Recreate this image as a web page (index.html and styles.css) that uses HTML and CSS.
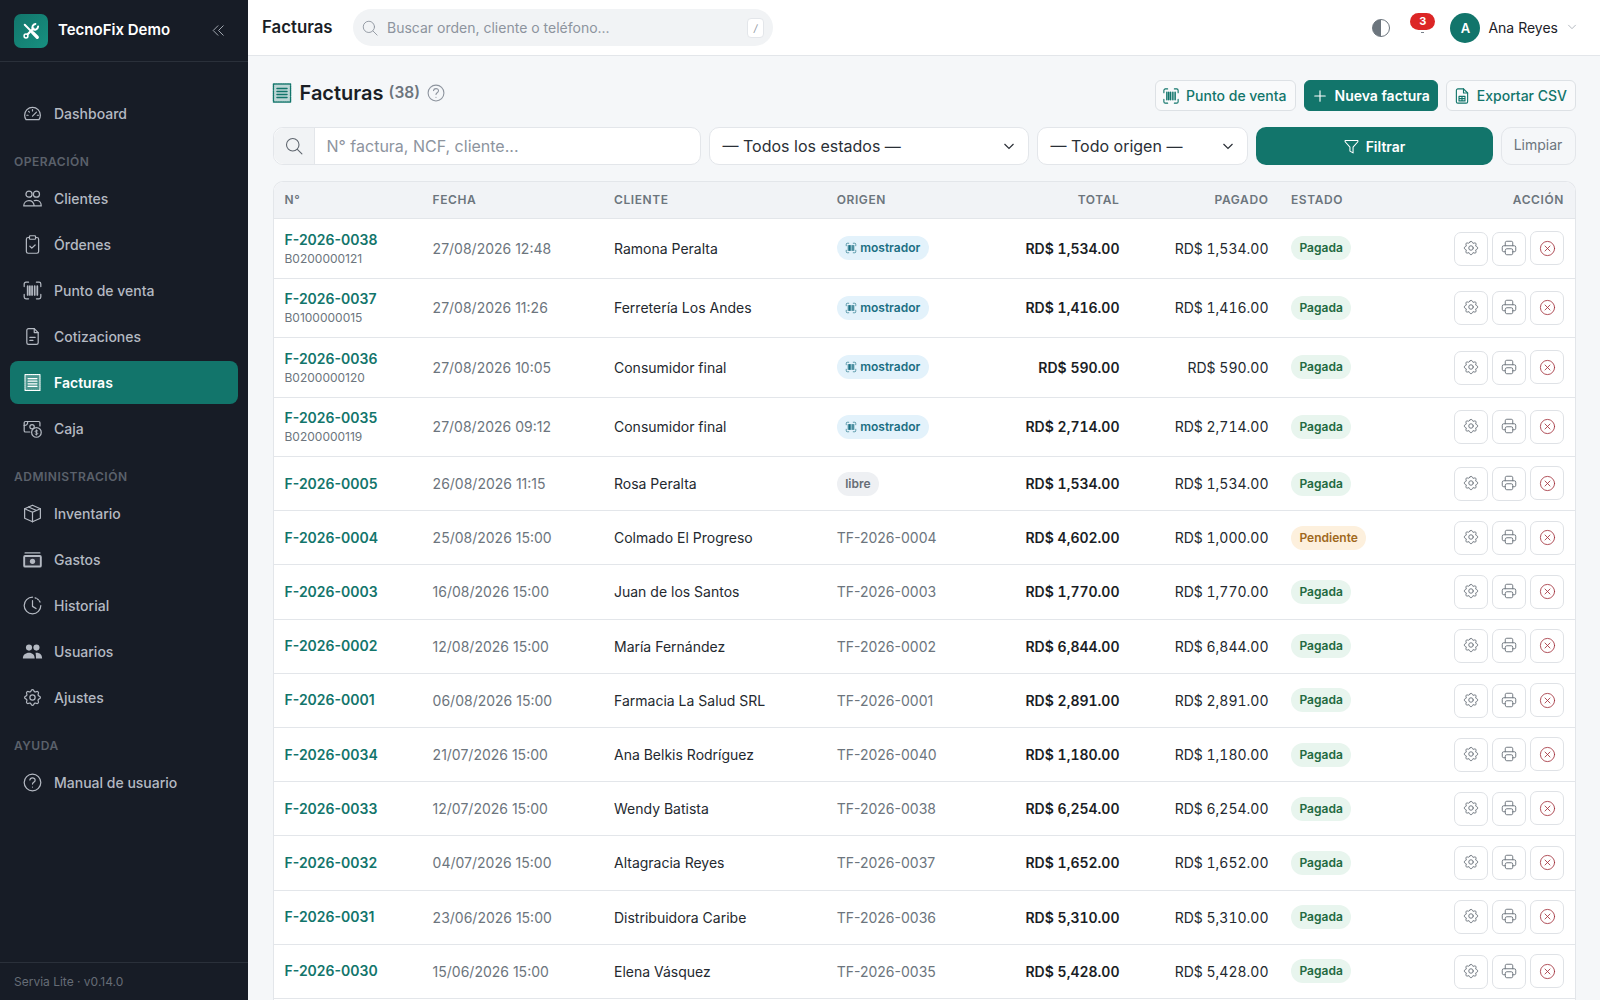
FILE: index.html
```html
<!DOCTYPE html>
<html lang="es">
<head>
    <meta charset="UTF-8">
    <title>Facturas - TecnoFix Demo</title>
    <link rel="stylesheet" href="styles.css">
</head>
<body>
    <svg class="icon-defs" xmlns="http://www.w3.org/2000/svg">
        <symbol id="i-gauge" viewBox="0 0 24 24"><path d="M3 14a9 9 0 0 1 18 0c0 2-.6 3.600-1.600 5H4.600C3.600 17.600 3 16 3 14z"/><path d="M12 15l4.500-4.500M5.500 14h1.500M17.500 14H19M12 7.500V9M7.500 9.500l1 1"/></symbol>
        <symbol id="i-users" viewBox="0 0 24 24"><circle cx="8" cy="7" r="3.500"/><circle cx="16.500" cy="7" r="3.500"/><path d="M2 20.500c0-3.500 2.500-6 6-6s5.500 2.500 6 6zM14 14.500c.8-.2 1.600-.3 2.500-.3 3.200 0 5.500 2.700 5.500 6.300h-8"/></symbol>
        <symbol id="i-clipboard" viewBox="0 0 24 24"><path d="M8.500 4H7a2 2 0 0 0-2 2v14a2 2 0 0 0 2 2h10a2 2 0 0 0 2-2V6a2 2 0 0 0-2-2h-1.500"/><rect x="8.500" y="2" width="7" height="4" rx="1"/><path d="M9 14l2.200 2.200L15 12.500"/></symbol>
        <symbol id="i-scan" viewBox="0 0 24 24"><path d="M2.500 7.500V4.500a2 2 0 0 1 2-2h3M16.500 2.500h3a2 2 0 0 1 2 2v3M21.500 16.500v3a2 2 0 0 1-2 2h-3M7.500 21.500h-3a2 2 0 0 1-2-2v-3"/><path d="M6.500 7v10M9 7v10M11.500 7v10M14.500 7v10M17.500 7v10" stroke-width="2"/></symbol>
        <symbol id="i-file" viewBox="0 0 24 24"><path d="M14 3H7.500a2 2 0 0 0-2 2v14a2 2 0 0 0 2 2h9a2 2 0 0 0 2-2V7.500z"/><path d="M14 3v4.500h4.500M9 13h6M9 16.500h3.500"/></symbol>
        <symbol id="i-receipt" viewBox="0 0 24 24"><path d="M3.500 3h17v18h-17z" stroke-dasharray="1.500 .8"/><path d="M4.500 4h15v16h-15z" fill="currentColor" fill-opacity=".25" stroke="none"/><path d="M7 7.500h10M7 10.500h10M7 13.500h10M7 16.500h10" stroke-width="1.500"/></symbol>
        <symbol id="i-cash" viewBox="0 0 24 24"><path d="M9 16H4a1.500 1.500 0 0 1-1.500-1.500v-9A1.500 1.500 0 0 1 4 4h15a1.500 1.500 0 0 1 1.500 1.500V9"/><path d="M2.500 8.500a4 4 0 0 0 4-4"/><circle cx="11.500" cy="10" r="2.500"/><circle cx="16.500" cy="16.500" r="5.500"/><path d="M18 14.800c-1-.8-3-.6-3 .7s3 .9 3 2.200-2 1.500-3 .7M16.500 13.500v6" stroke-width="1.100"/></symbol>
        <symbol id="i-box" viewBox="0 0 24 24"><path d="M12 2.500l9 4v11l-9 4-9-4v-11z"/><path d="M3 6.500l9 4 9-4M12 10.500v11M7.500 4.500l9 4"/></symbol>
        <symbol id="i-money" viewBox="0 0 24 24"><path d="M3.500 4.500h17"/><rect x="2.500" y="8" width="19" height="12" rx="1" stroke-width="2.200" fill="currentColor" fill-opacity=".12"/><circle cx="12" cy="14" r="3" fill="currentColor" stroke="none"/></symbol>
        <symbol id="i-clock" viewBox="0 0 24 24"><path d="M12 2.500a9.500 9.500 0 1 0 9.500 9.500"/><path d="M15 3.200a9.500 9.500 0 0 1 6 6" stroke-dasharray="1.500 1.500"/><path d="M12 6.500V13l4 2.500"/></symbol>
        <symbol id="i-people" viewBox="0 0 24 24"><circle cx="8" cy="7.500" r="3.500" fill="currentColor" stroke="none"/><circle cx="16.500" cy="7.500" r="3.500" fill="currentColor" stroke="none"/><path d="M1 20c0-4 3-6.500 7-6.500s6.500 2.500 6.500 6.500zM15.500 13.500c4.500-.5 7.500 2 7.500 6.500h-7c0-2.500-.2-4.500-.5-6.500z" fill="currentColor" stroke="none"/></symbol>
        <symbol id="i-gear" viewBox="0 0 24 24"><path d="M10.325 4.317c.426-1.756 2.924-1.756 3.350 0a1.724 1.724 0 0 0 2.573 1.066c1.543-.94 3.310.826 2.370 2.370a1.724 1.724 0 0 0 1.065 2.572c1.756.426 1.756 2.924 0 3.350a1.724 1.724 0 0 0-1.066 2.573c.94 1.543-.826 3.310-2.370 2.370a1.724 1.724 0 0 0-2.572 1.065c-.426 1.756-2.924 1.756-3.350 0a1.724 1.724 0 0 0-2.573-1.066c-1.543.94-3.310-.826-2.370-2.370a1.724 1.724 0 0 0-1.065-2.572c-1.756-.426-1.756-2.924 0-3.350a1.724 1.724 0 0 0 1.066-2.573c-.94-1.543.826-3.310 2.370-2.370c1 .608 2.296.07 2.572-1.065z"/><circle cx="12" cy="12" r="3"/></symbol>
        <symbol id="i-help" viewBox="0 0 24 24"><circle cx="12" cy="12" r="9.500"/><path d="M12 17.200v.01M12 13.800c0-1.200.6-1.700 1.400-2.200 1-.6 1.600-1.200 1.600-2.300 0-1.500-1.300-2.600-3-2.600-1.600 0-2.800 1-3 2.400"/></symbol>
        <symbol id="i-printer" viewBox="0 0 24 24"><path d="M17 17h2a2 2 0 0 0 2-2v-4a2 2 0 0 0-2-2H5a2 2 0 0 0-2 2v4a2 2 0 0 0 2 2h2"/><path d="M17 9V5a2 2 0 0 0-2-2H9a2 2 0 0 0-2 2v4"/><path d="M7 15a2 2 0 0 1 2-2h6a2 2 0 0 1 2 2v4a2 2 0 0 1-2 2H9a2 2 0 0 1-2-2z"/></symbol>
        <symbol id="i-xcircle" viewBox="0 0 24 24"><circle cx="12" cy="12" r="10"/><path d="M8.500 8.500l7 7M15.500 8.500l-7 7"/></symbol>
        <symbol id="i-search" viewBox="0 0 24 24"><circle cx="10.500" cy="10.500" r="7.500"/><path d="M16 16l5.500 5.500"/></symbol>
    </svg>

    <div class="app">
        <aside class="sidebar">
            <div class="brand">
                <span class="brand-logo">
                    <svg viewBox="0 0 24 24" fill="none" stroke="currentColor" stroke-linecap="round">
                        <path d="M4.500 4.500l8.500 8.500" stroke-width="2.400"/>
                        <path d="M14 14l5.500 5.500" stroke-width="4"/>
                        <path d="M8 16l7-7" stroke-width="2.600"/>
                        <path d="M20.500 6.700a4.200 4.200 0 0 1-6.300 3.100M14.200 9.800a4.200 4.200 0 0 1 3.100-6.300" stroke-width="2.400"/>
                        <circle cx="6" cy="18" r="2.300" stroke-width="1.800"/>
                    </svg>
                </span>
                <span class="brand-name">TecnoFix Demo</span>
                <svg class="brand-toggle" viewBox="0 0 24 24" fill="none" stroke="currentColor" stroke-width="1.600"><path d="M11.500 4l-8 8 8 8M20 4l-8 8 8 8"/></svg>
            </div>
            <nav class="nav">
                <a class="nav-item"><svg class="ico"><use href="#i-gauge"/></svg>Dashboard</a>
                <div class="nav-label">Operación</div>
                <a class="nav-item"><svg class="ico"><use href="#i-users"/></svg>Clientes</a>
                <a class="nav-item"><svg class="ico"><use href="#i-clipboard"/></svg>Órdenes</a>
                <a class="nav-item"><svg class="ico"><use href="#i-scan"/></svg>Punto de venta</a>
                <a class="nav-item"><svg class="ico"><use href="#i-file"/></svg>Cotizaciones</a>
                <a class="nav-item active"><svg class="ico"><use href="#i-receipt"/></svg>Facturas</a>
                <a class="nav-item"><svg class="ico"><use href="#i-cash"/></svg>Caja</a>
                <div class="nav-label">Administración</div>
                <a class="nav-item"><svg class="ico"><use href="#i-box"/></svg>Inventario</a>
                <a class="nav-item"><svg class="ico"><use href="#i-money"/></svg>Gastos</a>
                <a class="nav-item"><svg class="ico"><use href="#i-clock"/></svg>Historial</a>
                <a class="nav-item"><svg class="ico"><use href="#i-people"/></svg>Usuarios</a>
                <a class="nav-item"><svg class="ico"><use href="#i-gear"/></svg>Ajustes</a>
                <div class="nav-label">Ayuda</div>
                <a class="nav-item"><svg class="ico"><use href="#i-help"/></svg>Manual de usuario</a>
            </nav>
            <div class="sidebar-foot">Servia Lite · v0.14.0</div>
        </aside>

        <main class="main">
            <header class="topbar">
                <div class="topbar-title">Facturas</div>
                <div class="global-search">
                    <svg class="ico"><use href="#i-search"/></svg>
                    <span class="global-search-text">Buscar orden, cliente o teléfono...</span>
                    <kbd>/</kbd>
                </div>
                <div class="topbar-right">
                    <span class="theme-toggle"></span>
                    <span class="notif">3</span>
                    <span class="avatar">A</span>
                    <span class="user-name">Ana Reyes</span>
                    <svg class="user-caret" viewBox="0 0 24 24" fill="none" stroke="currentColor" stroke-width="1.800"><path d="M3 7l9 9 9-9"/></svg>
                </div>
            </header>

            <section class="content">
                <div class="page-head">
                    <h1><svg class="ico title-ico"><use href="#i-receipt"/></svg>Facturas <small>(38)</small><svg class="ico help-ico"><use href="#i-help"/></svg></h1>
                    <div class="page-actions">
                        <a class="btn btn-outline"><svg class="ico"><use href="#i-scan"/></svg>Punto de venta</a>
                        <a class="btn btn-primary"><svg class="ico" viewBox="0 0 24 24"><path d="M12 5v14M5 12h14"/></svg>Nueva factura</a>
                        <a class="btn btn-outline"><svg class="ico" viewBox="0 0 24 24"><path d="M14 2.500H6.500a2 2 0 0 0-2 2v15a2 2 0 0 0 2 2h11a2 2 0 0 0 2-2V8z"/><path d="M14 2.500V8h5.500M8 12.500h8v6H8zM8 15.500h8M12 12.500v6"/></svg>Exportar CSV</a>
                    </div>
                </div>

                <div class="filters">
                    <div class="filter-search">
                        <span class="filter-search-ico"><svg class="ico"><use href="#i-search"/></svg></span>
                        <span class="filter-search-text">N° factura, NCF, cliente...</span>
                    </div>
                    <div class="select">— Todos los estados —<svg viewBox="0 0 24 24" fill="none" stroke="currentColor" stroke-width="2.400"><path d="M3 8l9 9 9-9"/></svg></div>
                    <div class="select">— Todo origen —<svg viewBox="0 0 24 24" fill="none" stroke="currentColor" stroke-width="2.400"><path d="M3 8l9 9 9-9"/></svg></div>
                    <a class="btn-filter"><svg class="ico" viewBox="0 0 24 24"><path d="M3 3.500h18v1.800l-6.800 7.700V21l-4.400-2.500V13L3 5.300z"/></svg>Filtrar</a>
                    <a class="btn-clear">Limpiar</a>
                </div>

                <div class="table-card">
                    <table class="invoices">
                        <colgroup>
                            <col class="c-num"><col class="c-date"><col class="c-client"><col class="c-origin"><col class="c-total"><col class="c-paid"><col class="c-state"><col class="c-action">
                        </colgroup>
                        <thead>
                            <tr><th>N°</th><th>Fecha</th><th>Cliente</th><th>Origen</th><th class="num">Total</th><th class="num">Pagado</th><th class="state">Estado</th><th class="num">Acción</th></tr>
                        </thead>
                        <tbody>
                            <tr class="tall">
                                <td><a class="inv">F-2026-0038</a><div class="ncf">B0200000121</div></td>
                                <td class="date">27/08/2026 12:48</td><td>Ramona Peralta</td>
                                <td><span class="pill pill-blue"><svg class="ico"><use href="#i-scan"/></svg>mostrador</span></td>
                                <td class="num total">RD$ 1,534.00</td><td class="num">RD$ 1,534.00</td>
                                <td class="state"><span class="pill pill-green">Pagada</span></td>
                                <td class="actions"><span class="act"><svg class="ico"><use href="#i-gear"/></svg></span><span class="act"><svg class="ico"><use href="#i-printer"/></svg></span><span class="act act-red"><svg class="ico"><use href="#i-xcircle"/></svg></span></td>
                            </tr>
                            <tr class="tall">
                                <td><a class="inv">F-2026-0037</a><div class="ncf">B0100000015</div></td>
                                <td class="date">27/08/2026 11:26</td><td>Ferretería Los Andes</td>
                                <td><span class="pill pill-blue"><svg class="ico"><use href="#i-scan"/></svg>mostrador</span></td>
                                <td class="num total">RD$ 1,416.00</td><td class="num">RD$ 1,416.00</td>
                                <td class="state"><span class="pill pill-green">Pagada</span></td>
                                <td class="actions"><span class="act"><svg class="ico"><use href="#i-gear"/></svg></span><span class="act"><svg class="ico"><use href="#i-printer"/></svg></span><span class="act act-red"><svg class="ico"><use href="#i-xcircle"/></svg></span></td>
                            </tr>
                            <tr class="tall">
                                <td><a class="inv">F-2026-0036</a><div class="ncf">B0200000120</div></td>
                                <td class="date">27/08/2026 10:05</td><td>Consumidor final</td>
                                <td><span class="pill pill-blue"><svg class="ico"><use href="#i-scan"/></svg>mostrador</span></td>
                                <td class="num total">RD$ 590.00</td><td class="num">RD$ 590.00</td>
                                <td class="state"><span class="pill pill-green">Pagada</span></td>
                                <td class="actions"><span class="act"><svg class="ico"><use href="#i-gear"/></svg></span><span class="act"><svg class="ico"><use href="#i-printer"/></svg></span><span class="act act-red"><svg class="ico"><use href="#i-xcircle"/></svg></span></td>
                            </tr>
                            <tr class="tall">
                                <td><a class="inv">F-2026-0035</a><div class="ncf">B0200000119</div></td>
                                <td class="date">27/08/2026 09:12</td><td>Consumidor final</td>
                                <td><span class="pill pill-blue"><svg class="ico"><use href="#i-scan"/></svg>mostrador</span></td>
                                <td class="num total">RD$ 2,714.00</td><td class="num">RD$ 2,714.00</td>
                                <td class="state"><span class="pill pill-green">Pagada</span></td>
                                <td class="actions"><span class="act"><svg class="ico"><use href="#i-gear"/></svg></span><span class="act"><svg class="ico"><use href="#i-printer"/></svg></span><span class="act act-red"><svg class="ico"><use href="#i-xcircle"/></svg></span></td>
                            </tr>
                            <tr>
                                <td><a class="inv">F-2026-0005</a></td>
                                <td class="date">26/08/2026 11:15</td><td>Rosa Peralta</td>
                                <td><span class="pill pill-gray">libre</span></td>
                                <td class="num total">RD$ 1,534.00</td><td class="num">RD$ 1,534.00</td>
                                <td class="state"><span class="pill pill-green">Pagada</span></td>
                                <td class="actions"><span class="act"><svg class="ico"><use href="#i-gear"/></svg></span><span class="act"><svg class="ico"><use href="#i-printer"/></svg></span><span class="act act-red"><svg class="ico"><use href="#i-xcircle"/></svg></span></td>
                            </tr>
                            <tr>
                                <td><a class="inv">F-2026-0004</a></td>
                                <td class="date">25/08/2026 15:00</td><td>Colmado El Progreso</td>
                                <td class="date">TF-2026-0004</td>
                                <td class="num total">RD$ 4,602.00</td><td class="num">RD$ 1,000.00</td>
                                <td class="state"><span class="pill pill-amber">Pendiente</span></td>
                                <td class="actions"><span class="act"><svg class="ico"><use href="#i-gear"/></svg></span><span class="act"><svg class="ico"><use href="#i-printer"/></svg></span><span class="act act-red"><svg class="ico"><use href="#i-xcircle"/></svg></span></td>
                            </tr>
                            <tr>
                                <td><a class="inv">F-2026-0003</a></td>
                                <td class="date">16/08/2026 15:00</td><td>Juan de los Santos</td>
                                <td class="date">TF-2026-0003</td>
                                <td class="num total">RD$ 1,770.00</td><td class="num">RD$ 1,770.00</td>
                                <td class="state"><span class="pill pill-green">Pagada</span></td>
                                <td class="actions"><span class="act"><svg class="ico"><use href="#i-gear"/></svg></span><span class="act"><svg class="ico"><use href="#i-printer"/></svg></span><span class="act act-red"><svg class="ico"><use href="#i-xcircle"/></svg></span></td>
                            </tr>
                            <tr>
                                <td><a class="inv">F-2026-0002</a></td>
                                <td class="date">12/08/2026 15:00</td><td>María Fernández</td>
                                <td class="date">TF-2026-0002</td>
                                <td class="num total">RD$ 6,844.00</td><td class="num">RD$ 6,844.00</td>
                                <td class="state"><span class="pill pill-green">Pagada</span></td>
                                <td class="actions"><span class="act"><svg class="ico"><use href="#i-gear"/></svg></span><span class="act"><svg class="ico"><use href="#i-printer"/></svg></span><span class="act act-red"><svg class="ico"><use href="#i-xcircle"/></svg></span></td>
                            </tr>
                            <tr>
                                <td><a class="inv">F-2026-0001</a></td>
                                <td class="date">06/08/2026 15:00</td><td>Farmacia La Salud SRL</td>
                                <td class="date">TF-2026-0001</td>
                                <td class="num total">RD$ 2,891.00</td><td class="num">RD$ 2,891.00</td>
                                <td class="state"><span class="pill pill-green">Pagada</span></td>
                                <td class="actions"><span class="act"><svg class="ico"><use href="#i-gear"/></svg></span><span class="act"><svg class="ico"><use href="#i-printer"/></svg></span><span class="act act-red"><svg class="ico"><use href="#i-xcircle"/></svg></span></td>
                            </tr>
                            <tr>
                                <td><a class="inv">F-2026-0034</a></td>
                                <td class="date">21/07/2026 15:00</td><td>Ana Belkis Rodríguez</td>
                                <td class="date">TF-2026-0040</td>
                                <td class="num total">RD$ 1,180.00</td><td class="num">RD$ 1,180.00</td>
                                <td class="state"><span class="pill pill-green">Pagada</span></td>
                                <td class="actions"><span class="act"><svg class="ico"><use href="#i-gear"/></svg></span><span class="act"><svg class="ico"><use href="#i-printer"/></svg></span><span class="act act-red"><svg class="ico"><use href="#i-xcircle"/></svg></span></td>
                            </tr>
                            <tr>
                                <td><a class="inv">F-2026-0033</a></td>
                                <td class="date">12/07/2026 15:00</td><td>Wendy Batista</td>
                                <td class="date">TF-2026-0038</td>
                                <td class="num total">RD$ 6,254.00</td><td class="num">RD$ 6,254.00</td>
                                <td class="state"><span class="pill pill-green">Pagada</span></td>
                                <td class="actions"><span class="act"><svg class="ico"><use href="#i-gear"/></svg></span><span class="act"><svg class="ico"><use href="#i-printer"/></svg></span><span class="act act-red"><svg class="ico"><use href="#i-xcircle"/></svg></span></td>
                            </tr>
                            <tr>
                                <td><a class="inv">F-2026-0032</a></td>
                                <td class="date">04/07/2026 15:00</td><td>Altagracia Reyes</td>
                                <td class="date">TF-2026-0037</td>
                                <td class="num total">RD$ 1,652.00</td><td class="num">RD$ 1,652.00</td>
                                <td class="state"><span class="pill pill-green">Pagada</span></td>
                                <td class="actions"><span class="act"><svg class="ico"><use href="#i-gear"/></svg></span><span class="act"><svg class="ico"><use href="#i-printer"/></svg></span><span class="act act-red"><svg class="ico"><use href="#i-xcircle"/></svg></span></td>
                            </tr>
                            <tr>
                                <td><a class="inv">F-2026-0031</a></td>
                                <td class="date">23/06/2026 15:00</td><td>Distribuidora Caribe</td>
                                <td class="date">TF-2026-0036</td>
                                <td class="num total">RD$ 5,310.00</td><td class="num">RD$ 5,310.00</td>
                                <td class="state"><span class="pill pill-green">Pagada</span></td>
                                <td class="actions"><span class="act"><svg class="ico"><use href="#i-gear"/></svg></span><span class="act"><svg class="ico"><use href="#i-printer"/></svg></span><span class="act act-red"><svg class="ico"><use href="#i-xcircle"/></svg></span></td>
                            </tr>
                            <tr>
                                <td><a class="inv">F-2026-0030</a></td>
                                <td class="date">15/06/2026 15:00</td><td>Elena Vásquez</td>
                                <td class="date">TF-2026-0035</td>
                                <td class="num total">RD$ 5,428.00</td><td class="num">RD$ 5,428.00</td>
                                <td class="state"><span class="pill pill-green">Pagada</span></td>
                                <td class="actions"><span class="act"><svg class="ico"><use href="#i-gear"/></svg></span><span class="act"><svg class="ico"><use href="#i-printer"/></svg></span><span class="act act-red"><svg class="ico"><use href="#i-xcircle"/></svg></span></td>
                            </tr>
                        </tbody>
                    </table>
                </div>
            </section>
        </main>
    </div>
</body>
</html>
```
FILE: styles.css
```css
:root {
    --teal: #12756b;
    --ink: #1c2128;
    --muted: #6c757d;
    --line: #e3e6ea;
    --page: #f5f7f9;
    --side: #171c26;
}

* {
    margin: 0;
    padding: 0;
    box-sizing: border-box;
}

html, body {
    height: 100%;
    overflow: hidden;
}

body {
    font-family: 'Inter', 'Liberation Sans', sans-serif;
    font-size: 14px;
    line-height: 1.5;
    color: var(--ink);
    background: var(--page);
}

.icon-defs {
    display: none;
}

.ico {
    width: 18px;
    height: 18px;
    flex: none;
    fill: none;
    stroke: currentColor;
    stroke-width: 1.5;
    stroke-linecap: round;
    stroke-linejoin: round;
}

.app {
    display: grid;
    grid-template-columns: 248px 1fr;
    height: 1000px;
}

/* sidebar */
.sidebar {
    display: flex;
    flex-direction: column;
    background: var(--side);
    color: #b4b9c2;
}

.brand {
    display: flex;
    align-items: center;
    height: 62px;
    padding: 0 22px 0 14px;
    border-bottom: 1px solid #2a303a;
}

.brand-logo {
    display: flex;
    align-items: center;
    justify-content: center;
    width: 34px;
    height: 34px;
    border-radius: 7px;
    background: linear-gradient(135deg, #12756b, #179080);
    color: #fff;
}

.brand-logo svg {
    width: 20px;
    height: 20px;
}

.brand-name {
    margin-left: 10px;
    font-size: 15px;
    font-weight: 600;
    color: #fff;
}

.brand-toggle {
    width: 15px;
    height: 15px;
    margin-left: auto;
    color: #a0a6af;
}

.nav {
    padding: 30px 10px 0;
}

.nav-item {
    display: flex;
    align-items: center;
    gap: 11.500px;
    height: 43px;
    margin-bottom: 3px;
    padding-left: 11.500px;
    border-radius: 8px;
    font-weight: 500;
}

.nav-item .ico {
    width: 21px;
    height: 21px;
    stroke-width: 1.400;
}

.nav-item.active {
    background: var(--teal);
    color: #fff;
    font-weight: 600;
}

.nav-label {
    margin: 17.500px 0 6.500px 4px;
    height: 18px;
    font-size: 12px;
    line-height: 18px;
    font-weight: 600;
    letter-spacing: .5px;
    text-transform: uppercase;
    color: #5b616b;
}

.sidebar-foot {
    margin-top: auto;
    height: 38px;
    padding: 0 14px;
    border-top: 1px solid #2a303a;
    font-size: 12px;
    line-height: 37px;
    color: #666c76;
}

/* topbar */
.main {
    display: flex;
    flex-direction: column;
    min-width: 0;
}

.topbar {
    display: flex;
    align-items: center;
    flex: none;
    height: 56px;
    padding: 0 23px 0 14px;
    background: #fff;
    border-bottom: 1px solid var(--line);
}

.topbar-title {
    font-size: 16.800px;
    font-weight: 600;
    color: #1a1e25;
}

.global-search {
    display: flex;
    align-items: center;
    width: 420px;
    height: 37px;
    margin-left: 20.500px;
    padding: 0 7px 0 8px;
    border-radius: 19px;
    background: #f1f3f5;
    color: #8d949e;
}

.global-search .ico {
    stroke-width: 1.200;
}

.global-search-text {
    margin-left: 8px;
}

.global-search kbd {
    width: 17px;
    height: 20px;
    margin-left: auto;
    margin-right: 2px;
    border: 1px solid var(--line);
    border-radius: 4px;
    background: #fff;
    font: italic 10px/18px 'Inter', sans-serif;
    text-align: center;
    color: #8d949e;
}

.topbar-right {
    display: flex;
    align-items: center;
    margin-left: auto;
}

.theme-toggle {
    width: 18px;
    height: 18px;
    border-radius: 50%;
    border: 1.500px solid #6c757d;
    background: linear-gradient(90deg, #6c757d 50%, #fff 50%);
}

.notif {
    position: relative;
    width: 25px;
    height: 17px;
    margin: -12px 0 0 20px;
    border-radius: 9px;
    background: #dc2626;
    font-size: 11px;
    line-height: 17px;
    font-weight: 700;
    text-align: center;
    color: #fff;
}

/* the bell is almost hidden under the badge, only its clapper shows */
.notif::after {
    content: '';
    position: absolute;
    left: 11px;
    top: 19px;
    width: 3px;
    height: 1px;
    background: #7a818a;
}

.avatar {
    width: 30px;
    height: 30px;
    margin-left: 15px;
    border-radius: 50%;
    background: var(--teal);
    font-size: 13px;
    line-height: 30px;
    font-weight: 600;
    text-align: center;
    color: #fff;
}

.user-name {
    margin-left: 8px;
}

.user-caret {
    width: 10px;
    height: 10px;
    margin: -2px 0 0 9px;
    color: #9aa1aa;
}

/* page */
.content {
    display: flex;
    flex-direction: column;
    flex: 1;
    min-height: 0;
    padding: 24px 24px 0 24.500px;
}

.page-head {
    display: flex;
    align-items: center;
    justify-content: space-between;
    height: 31px;
}

h1 {
    display: flex;
    align-items: center;
    margin-top: -6px;
    font-size: 20px;
    font-weight: 600;
    color: #1a1e25;
    white-space: pre;
}

h1 small {
    font-size: 15.500px;
    font-weight: 600;
    color: var(--muted);
}

.title-ico {
    width: 24px;
    height: 24px;
    margin: 0 6px 0 -3px;
    color: var(--teal);
}

.help-ico {
    width: 20px;
    height: 20px;
    margin-left: 6px;
    stroke-width: 1.300;
    color: #8d949e;
}

.page-actions {
    display: flex;
    gap: 8px;
}

.btn {
    display: flex;
    align-items: center;
    gap: 6px;
    height: 31px;
    padding: 0 8px 0 6px;
    border: 1px solid #dde1e5;
    border-radius: 6px;
    font-weight: 500;
}

.btn-outline {
    background: #f9fafb;
    color: var(--teal);
}

.btn-primary {
    padding-right: 7px;
    border-color: var(--teal);
    background: var(--teal);
    color: #fff;
    font-weight: 600;
}

.filters {
    display: grid;
    grid-template-columns: 428px 320px 211px 237px 75px;
    gap: 8px;
    height: 38px;
    margin-top: 16px;
}

.filter-search,
.select,
.btn-clear {
    display: flex;
    align-items: center;
    border: 1px solid #e3e6ea;
    border-radius: 10px;
    background: #fff;
}

.filter-search-ico {
    display: flex;
    align-items: center;
    justify-content: center;
    width: 41px;
    height: 100%;
    border-right: 1px solid #e3e6ea;
    border-radius: 10px 0 0 10px;
    background: #f1f3f5;
    color: #5f666f;
}

.filter-search-ico .ico {
    width: 20px;
    height: 20px;
    stroke-width: 1.300;
}

.filter-search-text {
    padding-left: 12px;
    font-size: 16px;
    color: #8d949e;
}

.select {
    justify-content: space-between;
    padding: 0 13px;
    font-size: 16px;
    color: #2a2f36;
}

.select svg {
    width: 12px;
    height: 12px;
}

.btn-filter {
    display: flex;
    align-items: center;
    justify-content: center;
    gap: 6px;
    border-radius: 10px;
    background: var(--teal);
    font-weight: 600;
    color: #fff;
}

.btn-filter .ico {
    width: 17px;
    height: 17px;
    stroke-width: 1.500;
}

.btn-clear {
    justify-content: center;
    background: transparent;
    padding-bottom: 3px;
    color: var(--muted);
}

/* table */
.table-card {
    flex: 1;
    min-height: 0;
    margin-top: 16px;
    overflow: hidden;
    border: 1px solid var(--line);
    border-bottom: 0;
    border-radius: 10px 10px 0 0;
    background: #fff;
}

.invoices {
    width: 100%;
    table-layout: fixed;
    border-collapse: separate;
    border-spacing: 0;
}

.c-num { width: 148.100px; }
.c-date { width: 181.400px; }
.c-client { width: 222.700px; }
.c-origin { width: 170px; }
.c-total { width: 134.800px; }
.c-paid { width: 149px; }
.c-state { width: 150px; }

th {
    height: 37px;
    padding: 0 11px;
    border-bottom: 1px solid var(--line);
    background: #f1f3f6;
    font-size: 12px;
    font-weight: 600;
    letter-spacing: .6px;
    text-align: left;
    text-transform: uppercase;
    color: var(--muted);
}

td {
    height: 54.200px;
    padding: 0 11px;
    border-bottom: 1px solid var(--line);
    vertical-align: middle;
    white-space: nowrap;
    color: #24292f;
}

th.state,
td.state {
    padding-left: 11.500px;
}

tr.tall td {
    height: 59.500px;
}

th.num,
td.num {
    text-align: right;
    font-variant-numeric: tabular-nums;
}

td.total {
    font-weight: 600;
    color: #1a1e25;
}

td.date {
    color: var(--muted);
}

.inv {
    display: block;
    margin-top: -1px;
    font-weight: 600;
    color: var(--teal);
}

.ncf {
    font-size: 12px;
    line-height: 17px;
    color: var(--muted);
}

.pill {
    display: inline-flex;
    align-items: center;
    gap: 3px;
    height: 24px;
    padding: 0 8.500px;
    border-radius: 12px;
    font-size: 12px;
    font-weight: 600;
    vertical-align: middle;
}

.pill .ico {
    width: 12px;
    height: 12px;
    stroke-width: 1.300;
}

.pill-blue {
    background: #e3f2fb;
    color: #1b6f83;
}

.pill-green {
    background: #e8f5ee;
    color: #23693f;
}

.pill-amber {
    background: #fdf0dd;
    color: #a0681c;
}

.pill-gray {
    background: #eef0f3;
    color: #676d76;
}

.actions {
    font-size: 0;
    text-align: right;
}

.act {
    display: inline-flex;
    align-items: center;
    justify-content: center;
    width: 34px;
    height: 34px;
    margin-left: 4px;
    border: 1px solid #dfe2e6;
    border-radius: 7px;
    background: #fff;
    color: #70777f;
}

.act .ico {
    margin-bottom: 2px;
    stroke-width: 1.300;
}

.act-red {
    color: #a3333d;
}

.act-red .ico {
    width: 17px;
    height: 17px;
    margin-bottom: 0;
    stroke-width: 1.200;
}
```
